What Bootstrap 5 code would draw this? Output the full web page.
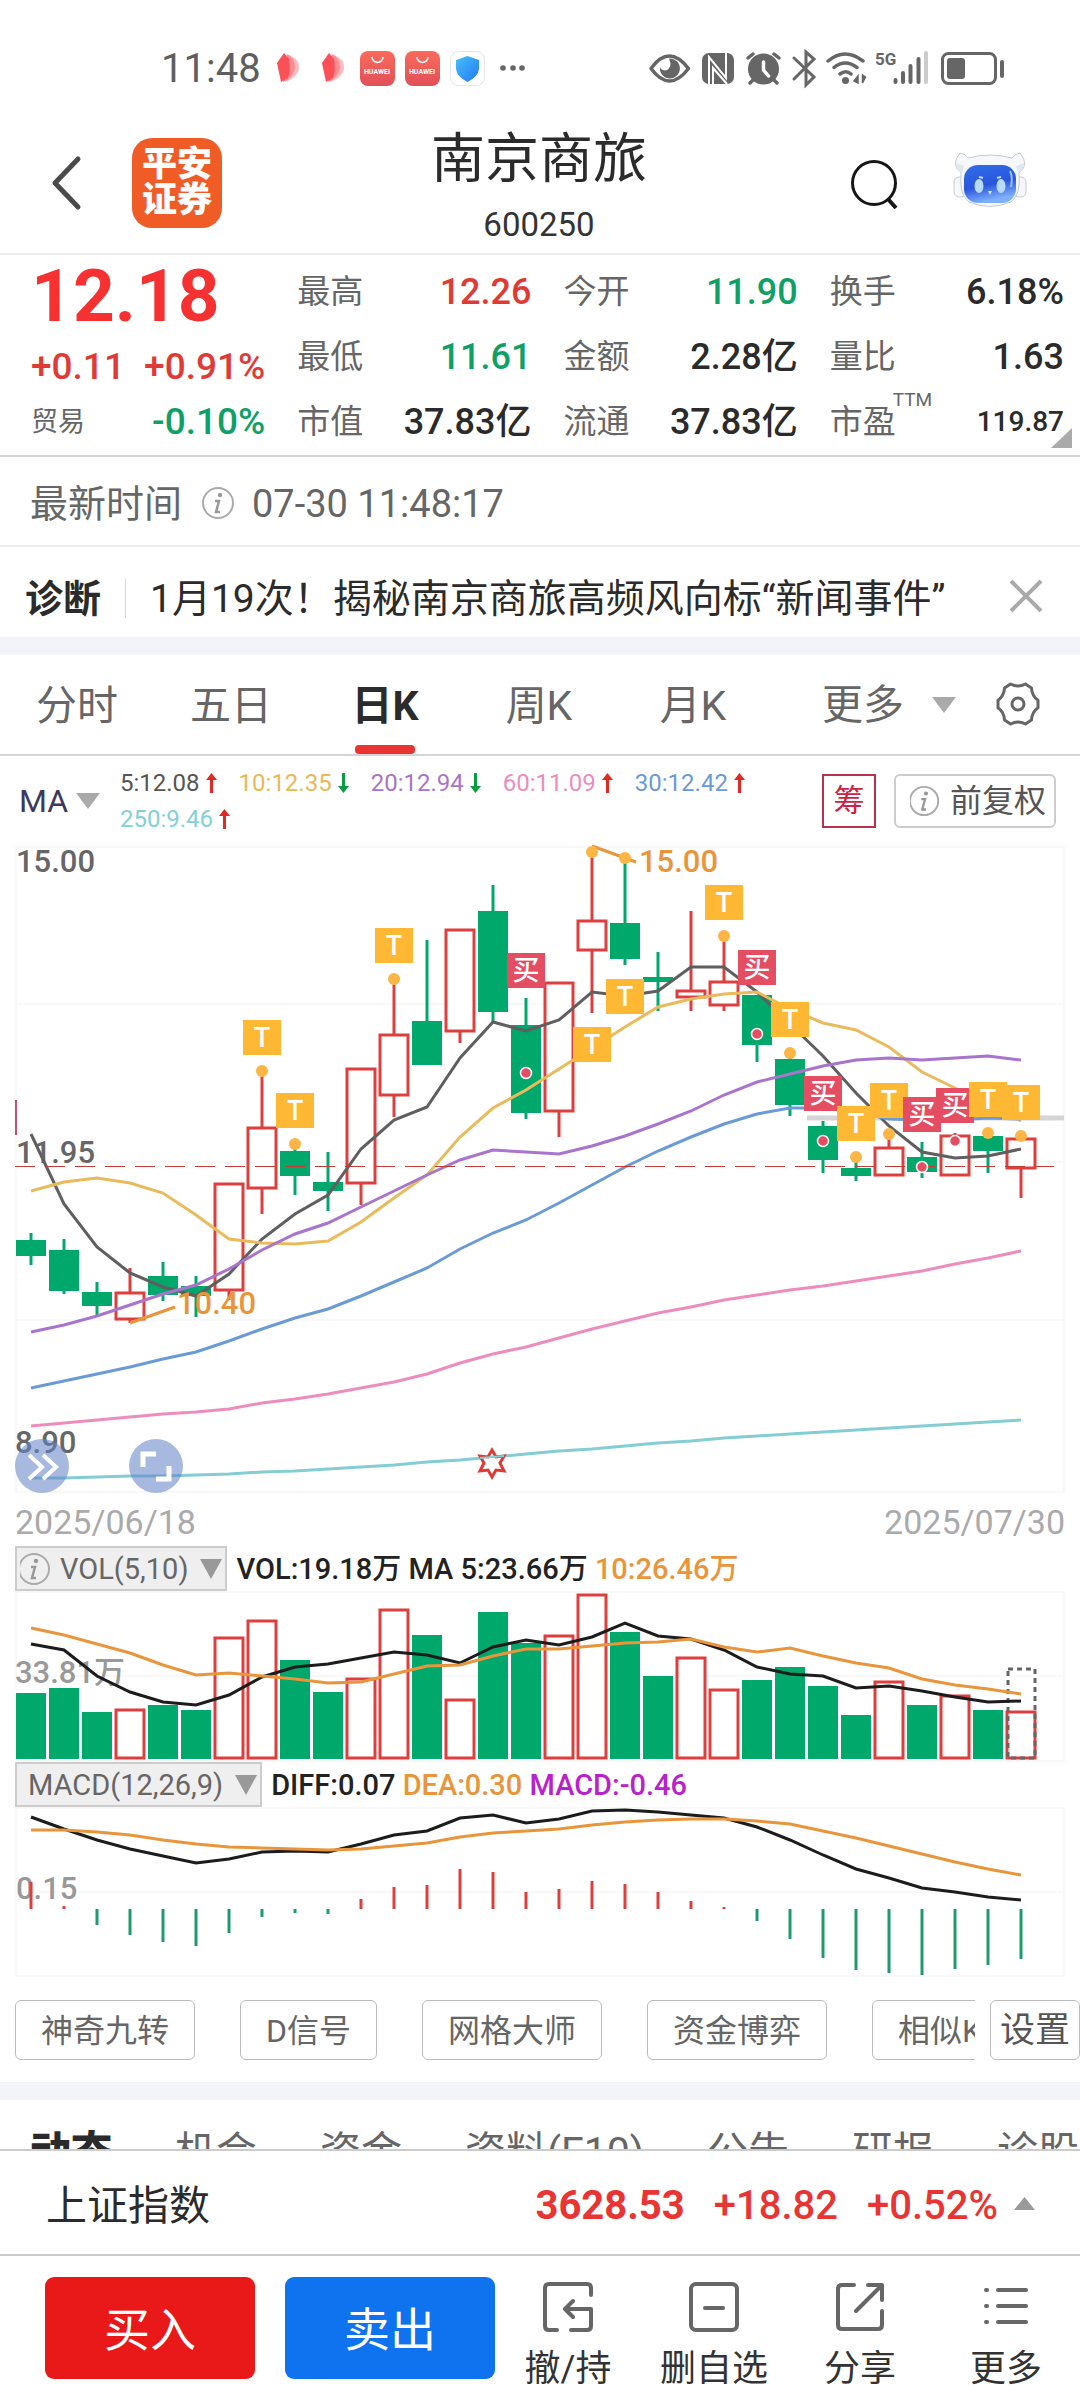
<!DOCTYPE html>
<html lang="zh-CN">
<head>
<meta charset="utf-8">
<meta name="viewport" content="width=device-width, initial-scale=1">
<title>南京商旅 600250</title>
<link href="https://cdn.jsdelivr.net/npm/bootstrap@5.3.0/dist/css/bootstrap.min.css" rel="stylesheet">
<style>
  :root { --up:#e03a36; --down:#0fa068; --ink:#2b2b2b; --grey:#666; --line:#d5d5d5; }
  body { font-family: Roboto, "Noto Sans CJK SC", sans-serif; color: var(--ink); background:#fff; font-size:32px; line-height:44px; }
  svg { display:block; flex:none; }
  button { font-family:inherit; color:inherit; background:none; border:0; padding:0; }
  a { color:inherit; text-decoration:none; }
  .app { height:100vh; }
  .scroller { min-height:0; }
  .up { color:var(--up); } .down { color:var(--down); } .grey { color:var(--grey); }

  .statusbar { height:92px; padding:46px 74px 0 161px; color:#5f5f5f; font-size:40px; line-height:46px; }
  .statusbar svg { margin-top:2px; }
  .topbar { display:grid; grid-template-columns:1fr auto 1fr; height:163px; padding:21px 52px 0 50px; border-bottom:2px solid #ececec; }
  .brand { width:90px; height:90px; border-radius:20px; background:#f05c25; color:#fff; font-size:35px; line-height:36px; font-weight:900; margin-left:46px; }
  .stock-name { font-size:54px; line-height:70px; font-weight:400; padding-top:2px; }
  .stock-code { font-size:33px; line-height:36px; margin-top:12px; color:#333; }

  .quote { display:grid; grid-template-columns:repeat(4,1fr); column-gap:32px; padding:4px 16px 1px 31px; border-bottom:2px solid var(--line); position:relative; }
  .quote .price { font-size:73px; line-height:74px; font-weight:700; color:#f53131; }
  .quote .change { font-size:37px; line-height:68px; font-weight:500; }
  .quote .sector { font-size:37px; line-height:42px; font-weight:500; }
  .sector .tag { font-size:27px; font-weight:400; }
  .quote dl div { height:65px; }
  .quote dt { font-size:33px; font-weight:400; color:var(--grey); }
  .quote dd { font-size:36px; font-weight:500; margin:0; }
  .quote dd.tight { font-size:28px; }
  .quote dt sup { font-size:19px; top:-27px; margin-left:-3px; }
  .corner { position:absolute; right:8px; bottom:7px; }

  .timerow { height:90px; padding:6px 31px 0 30px; font-size:38px; border-bottom:2px solid #ececec; color:var(--grey); }
  .diag { height:90px; padding:13px 37px 0 25px; font-size:38px; }
  .diag a { font-size:39px; }
  .diag .rule { width:1px; height:39px; background:#d5d5d5; margin:0 24px 0 24px; }
  .band { height:18px; background:#f3f4f9; flex:none; }

  .periods { height:101px; border-bottom:2px solid var(--line); font-size:41px; color:var(--grey); padding-right:40px; }
  .periods a { width:154px; text-align:center; align-self:stretch; line-height:103px; position:relative; }
  .periods .on { font-weight:700; color:var(--ink); }
  .periods .on::after { content:""; position:absolute; left:47px; width:60px; bottom:0; height:9px; border-radius:4px; background:#e93434; }
  .periods .more { margin-left:52px; gap:28px; }

  .marow { height:90px; padding:0 24px 0 19px; }
  .marow .key { font-size:32px; color:#3d3860; width:101px; }
  .legend { font-size:24px; line-height:36px; column-gap:22px; max-width:690px; }
  .legend svg { margin-left:6px; }
  .tagbox { height:54px; line-height:50px; font-size:32px; }
  .chip-cost { width:54px; border:2px solid #b8324e; color:#cc2244; font-size:31px; }
  .chip-adj { border:2px solid #ccc; border-radius:6px; color:#555; padding:0 8px 0 14px; margin-left:18px; }

  .charts { padding:0 15px; }
  .charts svg.panel { width:100%; height:auto; overflow:visible; }
  .stage { position:relative; }
  .round-btn { position:absolute; bottom:0; width:54px; height:54px; border-radius:50%; background:rgba(100,130,200,.56); }
  .rb-1 { left:0; } .rb-2 { left:114px; }
  .dates { height:53px; font-size:34px; color:#aaa; padding-top:7px; }
  .indrow { height:45px; font-size:29px; font-weight:500; color:#222; gap:9px; }
  .indrow button { height:45px; border:2px solid #ccc; background:#efefef; color:var(--grey); font-weight:400; padding:0 3px; }
  .indrow button span { margin:0 12px 0 8px; }
  .org { color:#e8953b; } .pur { color:#b822cc; }

  .tools { height:105px; padding:23px 0 22px 15px; }
  .tools .strip { gap:45px; min-width:0; overflow:hidden; margin-right:15px; }
  .tools button { flex:none; height:60px; line-height:56px; padding:2px 25px 0; border:1px solid #bbb; border-radius:6px; color:var(--grey); font-size:32px; }
  .tools .cfg { padding:2px 9px 0; font-size:35px; color:#555; }
  .sections { gap:63px; padding-left:30px; font-size:41px; line-height:104px; color:var(--grey); white-space:nowrap; }
  .sections .on { font-weight:900; color:var(--ink); }

  .index { height:107px; border-top:2px solid #ccc; border-bottom:2px solid #ccc; padding:6px 45px 0 46px; font-size:41px; flex:none; }
  .index .fig { font-size:40px; font-weight:500; color:#e93434; gap:29px; }
  .actions { height:144px; padding:21px 1px 0 45px; flex:none; }
  .trade { width:210px; height:102px; border-radius:9px; color:#fff; font-size:46px; padding-top:3px; }
  .buy { background:#ea1919; } .sell { background:#0f72ee; margin-left:30px; }
  .act { padding-top:4px; font-size:36px; color:#333; white-space:nowrap; }
  .act svg { margin-bottom:14px; }
</style>
</head>
<body>
<div class="app d-flex flex-column overflow-hidden">
<main class="scroller flex-fill overflow-hidden">

  <div class="statusbar d-flex">
    <span>11:48</span>
    <svg class="ms-3" width="256" height="44" viewBox="2 0 256 44">
      <defs>
        <linearGradient id="hw" x1="0" y1="0" x2="0" y2="1"><stop offset="0" stop-color="#fa6b5c"/><stop offset="1" stop-color="#e05058"/></linearGradient>
        <linearGradient id="sh" x1="0" y1="0" x2="1" y2="1"><stop offset="0" stop-color="#45c0fb"/><stop offset="1" stop-color="#2578f2"/></linearGradient>
        <g id="petal"><path d="M15 8q10 3 9 13-2 9-14 13z" fill="#fcbcbf"/><path d="M12 6q8 3 8 14-2 10-12 14z" fill="#fd8d91"/><path d="M9 5l5 6q2 12-1 19l-7 4L2 15z" fill="#fc5058"/></g>
        <g id="bag"><rect width="35" height="35" rx="8" fill="url(#hw)"/><path d="M12 6a5.5 5.5 0 0 0 11 0" fill="none" stroke="#fff" stroke-width="1.5"/><text x="17" y="23" text-anchor="middle" font-size="7" font-weight="700" fill="#fff">HUAWEI</text></g>
      </defs>
      <use href="#petal" x="0"/><use href="#petal" x="45"/>
      <use href="#bag" x="85" y="3"/><use href="#bag" x="130" y="3"/>
      <rect x="175.5" y="3.5" width="34" height="34" rx="8" fill="#fff" stroke="#e4e4e4"/>
      <path d="M192.500 8l11.500 4v9q-1 8-11.500 13-10.500-5-11.500-13v-9z" fill="url(#sh)"/>
      <circle cx="228" cy="20" r="2.800" fill="#666"/><circle cx="238" cy="20" r="2.800" fill="#666"/><circle cx="247" cy="20" r="2.800" fill="#666"/>
    </svg>
    <svg class="ms-auto" width="360" height="44" viewBox="646 48 360 44" fill="none" stroke="#666" stroke-width="3.5" stroke-linecap="round">
      <path d="M651 68.500q18-25 37.500 0-19 25-37.500 0z" stroke-linejoin="round"/><path d="M660 67a10 10 0 1 0 9-8.500q4 9-3 12-5 0-6-3.500z" fill="#666" stroke="none"/>
      <rect x="702" y="53" width="32" height="31" rx="7" fill="#666" stroke="none"/><path d="M709 84V57l17 21V53M713 84V68l14 16" stroke="#fff" stroke-width="2" stroke-linecap="butt"/>
      <circle cx="763.500" cy="69" r="15.500" fill="#666" stroke="none"/><path d="M763.500 62v8l5 6" stroke="#fff"/><path d="M748 58l5-4M774 54l5 4M753 80l-3 3M774 80l3 3"/>
      <path d="M794 58l20 19-8 8V52l8 7-20 20" stroke-width="3"/>
      <path d="M828 61q17-14 35 0M834 67.500q11-9 23 0M840 74q6-4.500 11 0"/><circle cx="845.500" cy="80.500" r="3.500" fill="#666" stroke="none"/><path d="M858 76v7l-4-2zM862.500 75v8l3-6z" stroke-width="1.5" fill="#666"/>
      <text x="875" y="65" font-size="17" font-weight="700" fill="#666" stroke="none">5G</text>
      <path d="M895.500 80v2M903 73v9M910.500 66v16M918.500 59v23" stroke-width="4"/><path d="M926 53v29" stroke="#ccc" stroke-width="4"/>
      <rect x="942.500" y="53.500" width="53" height="30" rx="6" stroke-width="3"/><rect x="947" y="58" width="18" height="21" rx="3" fill="#666" stroke="none"/><path d="M1002 62v14" stroke-width="4"/>
    </svg>
  </div>

  <header class="topbar align-items-center">
    <div class="d-flex align-items-center">
      <button aria-label="返回"><svg width="36" height="60" viewBox="1 0 36 60" fill="none" stroke="#4a4a4a" stroke-width="5" stroke-linecap="round" stroke-linejoin="round"><path d="M29 6L6 30l23 24"/></svg></button>
      <div class="brand d-flex flex-column justify-content-center text-center"><span>平安</span><span>证券</span></div>
    </div>
    <div class="text-center">
      <h1 class="stock-name m-0">南京商旅</h1>
      <div class="stock-code">600250</div>
    </div>
    <div class="d-flex align-items-center justify-content-end gap-5">
      <button aria-label="搜索"><svg width="56" height="54" viewBox="2 -1 56 54" fill="none" stroke="#161616" stroke-width="3"><circle cx="28" cy="26" r="21.5"/><path d="M42 42l8 9" stroke-width="4"/></svg></button>
      <button aria-label="智能助手"><svg width="76" height="62" viewBox="0 6 76 62">
        <defs><linearGradient id="face" x1="0" y1="0" x2=".3" y2="1"><stop offset="0" stop-color="#2f6fe8"/><stop offset=".6" stop-color="#2a55dd"/><stop offset="1" stop-color="#7fb0fa"/></linearGradient></defs>
        <g fill="#f5f7fa" stroke="#c6cad0" stroke-width="1"><rect x="2" y="31" width="12" height="20" rx="5"/><rect x="62" y="31" width="12" height="20" rx="5"/>
        <path d="M8 7q-10 12 1 20-2 22 8 29 20 9 42 0 10-7 8-29 11-8 1-20-6 1-8 5-22-6-44 0-2-4-8-5z"/></g>
        <path d="M4 17q0 8 6 10l2-7q-6-2-8-3zM72 17q0 8-6 10l-2-7q6-2 8-3z" fill="#dfe8f0"/>
        <rect x="12" y="19" width="52" height="38" rx="14" fill="url(#face)"/>
        <path d="M58 25q3 6 1 16" fill="none" stroke="#9cc0ff" stroke-width="2"/>
        <ellipse cx="27" cy="40" rx="4.5" ry="7" fill="#b8dafd"/><ellipse cx="49" cy="40" rx="4.5" ry="7" fill="#b8dafd"/><path d="M27 31l4 1M45 32l4-1" stroke="#b8dafd" stroke-width="2"/><path d="M36 45h4l-2 4z" fill="#cfe6ff"/>
      </svg></button>
    </div>
  </header>

  <section class="quote">
    <div>
      <div class="price">12.18</div>
      <div class="change up d-flex justify-content-between"><span>+0.11</span><span>+0.91%</span></div>
      <div class="sector d-flex justify-content-between"><span class="tag grey">贸易</span><span class="down">-0.10%</span></div>
    </div>
    <dl class="m-0">
      <div class="d-flex justify-content-between align-items-center"><dt>最高</dt><dd class="up">12.26</dd></div>
      <div class="d-flex justify-content-between align-items-center"><dt>最低</dt><dd class="down">11.61</dd></div>
      <div class="d-flex justify-content-between align-items-center"><dt>市值</dt><dd>37.83亿</dd></div>
    </dl>
    <dl class="m-0">
      <div class="d-flex justify-content-between align-items-center"><dt>今开</dt><dd class="down">11.90</dd></div>
      <div class="d-flex justify-content-between align-items-center"><dt>金额</dt><dd>2.28亿</dd></div>
      <div class="d-flex justify-content-between align-items-center"><dt>流通</dt><dd>37.83亿</dd></div>
    </dl>
    <dl class="m-0">
      <div class="d-flex justify-content-between align-items-center"><dt>换手</dt><dd>6.18%</dd></div>
      <div class="d-flex justify-content-between align-items-center"><dt>量比</dt><dd>1.63</dd></div>
      <div class="d-flex justify-content-between align-items-center"><dt>市盈<sup>TTM</sup></dt><dd class="tight">119.87</dd></div>
    </dl>
    <svg class="corner" width="21" height="20"><path d="M21 0v20H0z" fill="#aaa"/></svg>
  </section>

  <div class="timerow d-flex align-items-center">
    <span>最新时间</span>
    <svg class="ms-3 me-3" width="38" height="38" viewBox="-1 1 38 38"><use href="#info"/></svg>
    <span>07-30 11:48:17</span>
  </div>
  <div class="diag d-flex align-items-center">
    <b>诊断</b><span class="rule"></span>
    <a href="#news">1月19次！揭秘南京商旅高频风向标“新闻事件”</a>
    <button class="ms-auto" aria-label="关闭"><svg width="34" height="34" viewBox="0 3 34 34" stroke="#aaa" stroke-width="4" overflow="visible"><path d="M2 2l30 30M32 2L2 32"/></svg></button>
  </div>
  <div class="band"></div>

  <nav class="periods d-flex align-items-center">
    <a href="#fs">分时</a><a href="#d5">五日</a><a href="#dk" class="on">日K</a><a href="#wk">周K</a><a href="#mk">月K</a>
    <button class="more d-flex align-items-center"><span>更多</span><svg width="24" height="16"><path d="M0 0h24L12 16z" fill="#aaa"/></svg></button>
    <button class="ms-auto" aria-label="图表设置"><svg width="46" height="46" viewBox="-24 -22 46 46" fill="none" stroke="#666" stroke-width="3" stroke-linejoin="round"><path d="M20 3.700Q13.900 8 13.500 16L7.400 20Q0 16-7.400 20L-13.500 16Q-13.900 8-20 3.700V-3.700Q-13.900-8-13.500-16L-7.400-20Q0-16 7.400-20L13.500-16Q13.900-8 20-3.700z"/><circle r="6"/></svg></button>
  </nav>

  <div class="marow d-flex align-items-center">
    <button class="key d-flex align-items-center gap-2"><span>MA</span><svg width="24" height="16"><path d="M0 0h24L12 16z" fill="#aaa"/></svg></button>
    <div class="legend d-flex flex-wrap" id="legend"></div>
    <button class="tagbox chip-cost ms-auto">筹</button>
    <button class="tagbox chip-adj d-flex align-items-center"><svg class="me-2" width="32" height="32" viewBox="4 2 34 34"><use href="#info"/></svg>前复权</button>
  </div>

  <div class="charts">
    <div class="stage">
      <svg class="panel" id="kline" viewBox="15 846 1050 647"></svg>
      <button class="round-btn rb-1" aria-label="展开"><svg width="54" height="54" viewBox="0 0 54 54" fill="none" stroke="#fff" stroke-width="4"><path d="M14 16l13 12-13 12M28 16l13 12-13 12"/></svg></button>
      <button class="round-btn rb-2" aria-label="全屏"><svg width="54" height="54" viewBox="0 0 54 54" fill="none" stroke="#fff" stroke-width="5"><path d="M14 28V15h13M27 40h13V27"/></svg></button>
    </div>
    <div class="dates d-flex justify-content-between"><span>2025/06/18</span><span>2025/07/30</span></div>
    <div class="indrow d-flex align-items-center">
      <button class="d-flex align-items-center"><svg width="32" height="32" viewBox="5 3 32 32"><use href="#info"/></svg><span>VOL(5,10)</span><svg width="22" height="20"><path d="M0 0h22L11 20z" fill="#999"/></svg></button>
      <span>VOL:19.18万 MA 5:23.66万 <span class="org">10:26.46万</span></span>
    </div>
    <svg class="panel" id="vol" viewBox="15 1591 1050 171"></svg>
    <div class="indrow d-flex align-items-center">
      <button class="d-flex align-items-center"><span>MACD(12,26,9)</span><svg width="22" height="20"><path d="M0 0h22L11 20z" fill="#999"/></svg></button>
      <span>DIFF:0.07 <span class="org">DEA:0.30</span> <span class="pur">MACD:-0.46</span></span>
    </div>
    <svg class="panel" id="macd" viewBox="15 1807 1050 170"></svg>
  </div>

  <div class="tools d-flex">
    <div class="strip d-flex flex-fill"><button>神奇九转</button><button>D信号</button><button>网格大师</button><button>资金博弈</button><button>相似K线</button></div>
    <button class="cfg">设置</button>
  </div>
  <div class="band"></div>
  <nav class="sections d-flex">
    <a href="#a" class="on">动态</a><a href="#b">机会</a><a href="#c">资金</a><a href="#d">资料(F10)</a><a href="#e">公告</a><a href="#f">研报</a><a href="#g">诊股</a>
  </nav>
</main>

<div class="index d-flex align-items-center">
  <span>上证指数</span>
  <div class="fig d-flex ms-auto"><b>3628.53</b><span>+18.82</span><span>+0.52%</span></div>
  <svg class="ms-3" width="21" height="17"><path d="M10.500 0L21 13H0z" fill="#999"/></svg>
</div>
<footer class="actions d-flex">
  <button class="trade buy">买入</button><button class="trade sell">卖出</button>
  <div class="d-flex flex-fill">
    <button class="act col d-flex flex-column align-items-center"><svg width="52" height="52" viewBox="0 0 52 52" fill="none" stroke="#666" stroke-width="4" stroke-linecap="round" stroke-linejoin="round"><path d="M49 14V7q0-4-4-4H7Q3 3 3 7v38q0 4 4 4h8M29 49h16q4 0 4-4V28H23M31 20l-8 8 8 8"/></svg>撤/持</button>
    <button class="act col d-flex flex-column align-items-center"><svg width="52" height="52" viewBox="0 0 52 52" fill="none" stroke="#666" stroke-width="4" stroke-linecap="round"><rect x="3" y="3" width="46" height="46" rx="5"/><path d="M17 27h18"/></svg>删自选</button>
    <button class="act col d-flex flex-column align-items-center"><svg width="52" height="52" viewBox="0 0 52 52" fill="none" stroke="#666" stroke-width="4" stroke-linecap="round" stroke-linejoin="round"><path d="M20 4H8Q4 4 4 8v36q0 4 4 4h36q4 0 4-4V30M34 4h14v15M47 5L22 30"/></svg>分享</button>
    <button class="act col d-flex flex-column align-items-center"><svg width="52" height="52" viewBox="0 0 52 52" fill="none" stroke="#666" stroke-width="4" stroke-linecap="round"><path d="M18 9h28M18 25h28M18 41h28M6 9h1M6 25h1M6 41h1"/></svg>更多</button>
  </div>
</footer>
</div>

<svg width="0" height="0" class="position-absolute"><defs><g id="info"><circle cx="19" cy="19" r="15" fill="none" stroke="#aaa" stroke-width="2"/><circle cx="21" cy="11" r="2.200" fill="#999"/><path d="M16 17h4l-3 11h4" fill="none" stroke="#999" stroke-width="2.5"/></g></defs></svg>

<script src="https://cdn.jsdelivr.net/npm/bootstrap@5.3.0/dist/js/bootstrap.bundle.min.js"></script>
<script>
const RED = '#dc3f3d', GREEN = '#00a86b', X = i => 31 + 33 * i;
const line = (ys, color, w = 3) => `<polyline fill="none" stroke="${color}" stroke-width="${w}" points="${ys.map((y, i) => X(i) + ',' + y).join(' ')}"/>`;
const seg = (x1, y1, x2, y2, c, w, extra = '') => `<path d="M${x1} ${y1}L${x2} ${y2}" stroke="${c}" stroke-width="${w}" ${extra}/>`;
const label = (x, y, t, c, s = 31) => `<text x="${x}" y="${y}" font-size="${s}" font-weight="500" fill="${c}">${t}</text>`;
const frame = (top, bottom, rows) => `<rect x="16" y="${top + 1}" width="1048" height="${bottom - top - 2}" fill="none" stroke="#f8f8f8" stroke-width="2"/>` + rows.map(y => seg(16, y, 1064, y, '#f8f8f8', 2)).join('');
const bar = (i, top, bottom, up) => up
  ? `<rect x="${X(i) - 14}" y="${top + 1}" width="28" height="${Math.max(bottom - top - 2, 1)}" fill="#fff" stroke="${RED}" stroke-width="3"/>`
  : `<rect x="${X(i) - 15}" y="${top}" width="30" height="${bottom - top}" fill="${GREEN}"/>`;

// moving average legend: text, colour, direction
document.getElementById('legend').innerHTML = [['5:12.08', '#555', 1], ['10:12.35', '#e8b955', 0], ['20:12.94', '#a974cc', 0], ['60:11.09', '#ec8dbd', 1], ['30:12.42', '#6b9bd6', 1], ['250:9.46', '#83d0d6', 1]]
  .map(([t, c, up]) => `<span class="d-flex align-items-center" style="color:${c}">${t}<svg width="11" height="20" viewBox="0 0 11 20">${up ? '<path d="M5.500 0L11 7H7v13H4V7H0z" fill="#e02a26"/>' : '<path d="M5.500 20L11 13H7V0H4v13H0z" fill="#0a9c40"/>'}</svg></span>`).join('');

// candles: high, body top, body bottom, low, rising?
const candles = [[1233,1240,1256,1265,0],[1239,1250,1291,1294,0],[1282,1292,1306,1315,0],[1268,1292,1320,1323,1],[1262,1276,1295,1301,0],[1276,1286,1296,1317,0],[1183,1183,1291,1300,1],[1071,1127,1189,1214,1],[1144,1151,1176,1195,0],[1152,1182,1191,1211,0],[1068,1068,1184,1205,1],[979,1034,1096,1117,1],[940,1021,1065,1065,0],[929,929,1032,1043,1],[885,911,1012,1022,0],[998,1025,1113,1119,0],[982,982,1112,1137,1],[852,920,951,1013,1],[858,923,959,965,0],[952,977,982,1011,0],[911,990,998,1011,1],[936,981,1006,1011,1],[995,995,1045,1062,0],[1053,1059,1105,1116,0],[1121,1126,1160,1173,0],[1157,1168,1176,1181,0],[1134,1147,1176,1176,1],[1142,1157,1172,1178,0],[1133,1135,1176,1176,1],[1133,1136,1151,1173,0],[1136,1138,1169,1198,1]];
const ma = {
  '#5f5f5f': [1134,1204,1247,1273,1287,1296,1274,1239,1214,1195,1149,1120,1107,1058,1022,1031,1020,992,996,991,967,967,992,1024,1056,1093,1126,1152,1158,1156,1149],
  '#e8bb5c': [1191,1182,1178,1183,1193,1215,1239,1243,1244,1241,1222,1198,1175,1137,1108,1090,1069,1048,1027,1007,999,994,992,1009,1023,1030,1047,1072,1088,1104,1121],
  '#a974cc': [1332,1325,1316,1305,1294,1285,1269,1250,1234,1223,1207,1191,1175,1160,1150,1152,1154,1146,1136,1124,1111,1095,1082,1074,1066,1060,1058,1060,1058,1056,1060],
  '#6b9bd6': [1388,1381,1374,1367,1359,1352,1341,1329,1318,1309,1296,1282,1268,1249,1233,1220,1203,1185,1167,1151,1137,1124,1114,1108,1108,1112,1119,1120,1120,1118,1119],
  '#ec8dbd': [1426,1423,1420,1417,1414,1412,1409,1403,1399,1394,1388,1382,1374,1363,1354,1347,1338,1329,1321,1313,1307,1300,1295,1290,1286,1281,1276,1271,1264,1258,1251],
  '#83cdd3': [1478,1478,1477,1476,1476,1475,1474,1472,1471,1469,1467,1465,1462,1460,1457,1454,1451,1449,1446,1443,1441,1438,1436,1434,1432,1430,1428,1426,1424,1422,1420]
};
const yellowDots = {7:1071,8:1144,11:979,17:852,18:858,21:936,23:1053,25:1157,26:1134,29:1133,30:1136};
const redDots = {15:1073,22:1034,24:1141,27:1167,28:1141};
const marks = [[7,'T',1020],[8,'T',1093],[11,'T',928],[15,'买',953],[17,'T',1027],[18,'T',979],[21,'T',885],[22,'买',950],[23,'T',1002],[24,'买',1076],[25,'T',1106],[26,'T',1083],[27,'买',1097],[28,'买',1088],[29,'T',1082],[30,'T',1085]];

let k = frame(846, 1493, [1004, 1162, 1320]);
k += label(16, 872, '15.00', '#666') + label(16, 1163, '11.95', '#666') + label(15, 1453, '8.90', '#666');
k += seg(16, 1100, 16, 1135, '#c05070', 2);
candles.forEach(([h, t, b, l, up], i) => {
  k += seg(X(i), h, X(i), l, up ? RED : GREEN, 3) + bar(i, t, b, up);
});
k += seg(807, 1118, 1064, 1118, '#d5d5d5', 5);
for (const c in ma) k += line(ma[c], c);
k += `<path d="M15 1166.500H1054" stroke="#c23b36" stroke-width="1" stroke-dasharray="20 10"/>`;
k += seg(592, 846, 636, 862, '#e8953b', 3) + label(639, 872, '15.00', '#e8953b');
k += seg(130, 1323, 175, 1307, '#e8953b', 3) + label(177, 1314, '10.40', '#e8953b');
for (const i in yellowDots) k += `<circle cx="${X(+i)}" cy="${yellowDots[i]}" r="6" fill="#fdb545"/>`;
for (const i in redDots) k += `<circle cx="${X(+i)}" cy="${redDots[i]}" r="5.5" fill="#e44d62" stroke="#fff" stroke-width="1.5"/>`;
marks.forEach(([i, t, y]) => {
  k += `<rect x="${X(i) - 19}" y="${y}" width="38" height="35" fill="${t === 'T' ? '#ffb833' : '#e44d62'}"/><text x="${X(i)}" y="${y + 27}" text-anchor="middle" font-size="27" font-weight="500" fill="#fff">${t}</text>`;
});
k += '<path d="M492 1450l4 7 8-1-4 7 4 8-8-1-4 7-4-7-8 1 4-8-4-7 8 1z" fill="#fff" stroke="#e03a36" stroke-width="3"/>' + seg(480, 1458, 504, 1456, '#83cdd3', 2);
document.getElementById('kline').innerHTML = k;

// volume bars: top edge of each column
const volTop = [1693,1688,1712,1709,1705,1710,1637,1620,1660,1692,1678,1609,1635,1699,1612,1643,1635,1594,1632,1676,1657,1689,1680,1667,1686,1715,1681,1705,1695,1710,1711];
let v = frame(1591, 1762, [1676]) + label(15, 1683, '33.81万', '#999');
volTop.forEach((t, i) => v += bar(i, t, 1759, candles[i][4]));
v += '<rect x="1008" y="1669" width="27" height="89" fill="none" stroke="#666" stroke-width="3" stroke-dasharray="5 4"/>';
v += line([1644,1650,1676,1692,1702,1705,1695,1677,1667,1664,1658,1652,1655,1663,1647,1640,1645,1637,1623,1636,1639,1650,1667,1674,1676,1688,1686,1691,1697,1702,1701], '#1c1c1c');
v += line([1628,1635,1644,1653,1665,1675,1673,1676,1679,1683,1682,1674,1666,1665,1656,1649,1649,1646,1643,1642,1639,1647,1652,1648,1656,1663,1668,1679,1685,1689,1694], '#e8953b');
document.getElementById('vol').innerHTML = v;

// MACD histogram around its zero line
const zero = 1909, hist = [1882,1906,1925,1935,1942,1946,1933,1917,1913,1914,1899,1887,1885,1869,1872,1892,1889,1881,1884,1892,1901,1907,1921,1939,1958,1970,1973,1975,1969,1965,1959];
let m = frame(1807, 1977, [1892]) + label(16, 1899, '0.15', '#999');
hist.forEach((y, i) => m += seg(X(i), zero, X(i), y, y < zero ? RED : '#209a6c', 3));
m += line([1817,1829,1840,1849,1856,1863,1859,1852,1851,1852,1844,1835,1831,1818,1815,1823,1819,1811,1810,1812,1815,1818,1827,1840,1855,1869,1878,1888,1892,1897,1900], '#1c1c1c');
m += line([1830,1830,1832,1835,1840,1844,1847,1848,1849,1850,1849,1846,1843,1837,1833,1831,1829,1825,1822,1820,1819,1819,1821,1824,1831,1838,1846,1854,1862,1869,1875], '#e8953b');
document.getElementById('macd').innerHTML = m;
</script>
</body>
</html>
